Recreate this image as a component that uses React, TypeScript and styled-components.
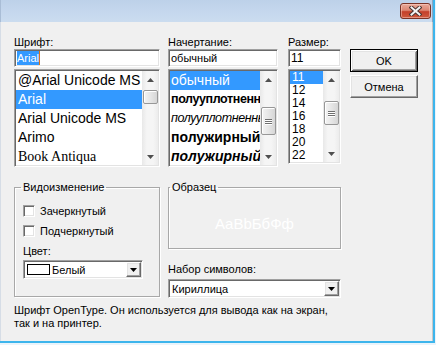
import React from "react";
import styled, { createGlobalStyle, css } from "styled-components";

const GlobalStyle = createGlobalStyle`
  html, body {
    margin: 0;
    padding: 0;
    background: #eaf4fb;
  }

  body {
    font-family: "Liberation Sans", Arial, sans-serif;
    font-size: 11px;
    color: #000;
  }

  * {
    box-sizing: border-box;
  }
`;

const sunken = css`
  border: 1px solid;
  border-color: #a0a0a0 #ffffff #ffffff #a0a0a0;
  box-shadow: inset 1px 1px 0 #696969, inset -1px -1px 0 #e3e3e3;
  padding: 1px;
  background: #fff;
`;

const raised = css`
  border: 1px solid;
  border-color: #ffffff #696969 #696969 #ffffff;
  box-shadow: inset -1px -1px 0 #a0a0a0, inset 1px 1px 0 #e3e3e3;
  background: #f0f0f0;
`;

const fontItems = [
  { name: "@Arial Unicode MS", family: `"Liberation Sans", Arial, sans-serif` },
  { name: "Arial", family: `"Liberation Sans", Arial, sans-serif`, selected: true },
  { name: "Arial Unicode MS", family: `"Liberation Sans", Arial, sans-serif` },
  { name: "Arimo", family: `Arimo, "Liberation Sans", sans-serif` },
  { name: "Book Antiqua", family: `"Liberation Serif", "DejaVu Serif", serif` },
];

// narrow = condensed face of the family, drawn a bit smaller and tighter
const styleItems = [
  { name: "обычный", weight: 400, italic: false, narrow: false, selected: true },
  { name: "полууплотненный", weight: 700, italic: false, narrow: true },
  { name: "полууплотненный", weight: 400, italic: true, narrow: true },
  { name: "полужирный", weight: 700, italic: false, narrow: false },
  { name: "полужирный", weight: 700, italic: true, narrow: false },
];

const sizeItems = ["11", "12", "14", "16", "18", "20", "22"];

const ArrowUp = () => (
  <svg width="7" height="4" viewBox="0 0 7 4">
    <path d="M0 4 L3.5 0 L7 4 Z" fill="#4f4f4f" />
  </svg>
);

const ArrowDown = () => (
  <svg width="7" height="4" viewBox="0 0 7 4">
    <path d="M0 0 L7 0 L3.5 4 Z" fill="#4f4f4f" />
  </svg>
);

const ComboArrow = () => (
  <svg width="7" height="4" viewBox="0 0 7 4">
    <path d="M0 0 L7 0 L3.5 4 Z" fill="#000" />
  </svg>
);

const CloseGlyph = () => (
  <svg width="13" height="10" viewBox="0 0 13 10">
    <path d="M2.5 1.5 L10.5 8.5 M10.5 1.5 L2.5 8.5" stroke="#4a3430" strokeWidth="4" strokeLinecap="square" />
    <path d="M2.5 1.5 L10.5 8.5 M10.5 1.5 L2.5 8.5" stroke="#f4f4f4" strokeWidth="2" strokeLinecap="square" />
  </svg>
);

type ScrollProps = { offset: number; size: number; grip?: boolean };

const VScroll = ({ offset, size, grip }: ScrollProps) => (
  <ScrollBar>
    <ScrollArrow>
      <ArrowUp />
    </ScrollArrow>
    <ScrollTrack>
      <Thumb $offset={offset} $size={size}>
        {grip && (
          <Grip>
            <span />
            <span />
            <span />
          </Grip>
        )}
      </Thumb>
    </ScrollTrack>
    <ScrollArrow>
      <ArrowDown />
    </ScrollArrow>
  </ScrollBar>
);

export default function App() {
  return (
    <>
      <GlobalStyle />
      <Window>
        <TitleBar>
          <CloseButton>
            <CloseGlyph />
          </CloseButton>
        </TitleBar>

        <Client>
          <TopRow>
            <Column $width={146} $gap={8}>
              <FieldLabel>Шрифт:</FieldLabel>
              <TextInput>
                <Selected>Arial</Selected>
                <Caret />
              </TextInput>
              <ListBox $height={98}>
                <Items>
                  {fontItems.map((f) => (
                    <FontItem key={f.name} $family={f.family} $selected={!!f.selected}>
                      {f.name}
                    </FontItem>
                  ))}
                </Items>
                <VScroll offset={2} size={14} />
              </ListBox>
            </Column>

            <Column $width={110} $gap={10}>
              <FieldLabel>Начертание:</FieldLabel>
              <TextInput>обычный</TextInput>
              <ListBox $height={98}>
                <Items>
                  {styleItems.map((s, i) => (
                    <StyleItem
                      key={i}
                      $weight={s.weight}
                      $italic={s.italic}
                      $narrow={s.narrow}
                      $selected={!!s.selected}
                    >
                      {s.name}
                    </StyleItem>
                  ))}
                </Items>
                <VScroll offset={19} size={28} grip />
              </ListBox>
            </Column>

            <Column $width={53} $gap={9}>
              <FieldLabel>Размер:</FieldLabel>
              <TextInput $large>11</TextInput>
              <ListBox $height={95}>
                <Items>
                  {sizeItems.map((s, i) => (
                    <SizeItem key={s} $selected={i === 0}>
                      {s}
                    </SizeItem>
                  ))}
                </Items>
                <VScroll offset={13} size={24} grip />
              </ListBox>
            </Column>

            <ButtonColumn>
              <DialogButton $default>OK</DialogButton>
              <DialogButton>Отмена</DialogButton>
            </ButtonColumn>
          </TopRow>

          <BottomRow>
            <GroupBox $width={146} $height={116}>
              <GroupLegend $indent={6}>Видоизменение</GroupLegend>
              <Effects>
                <CheckRow>
                  <CheckBox />
                  Зачеркнутый
                </CheckRow>
                <CheckRow>
                  <CheckBox />
                  Подчеркнутый
                </CheckRow>
                <ColorLabel>Цвет:</ColorLabel>
                <ComboBox $width={120}>
                  <ComboValue>
                    <Swatch />
                    Белый
                  </ComboValue>
                  <DropButton>
                    <ComboArrow />
                  </DropButton>
                </ComboBox>
              </Effects>
            </GroupBox>

            <RightColumn>
              <GroupBox $width={173} $height={68}>
                <GroupLegend $indent={1}>Образец</GroupLegend>
                <SampleArea>AaBbБбФф</SampleArea>
              </GroupBox>
              <ScriptLabel>Набор символов:</ScriptLabel>
              <ComboBox $width={173}>
                <ComboValue>Кириллица</ComboValue>
                <DropButton>
                  <ComboArrow />
                </DropButton>
              </ComboBox>
            </RightColumn>
          </BottomRow>

          <Note>
            Шрифт OpenType. Он используется для вывода как на экран,
            <br />
            так и на принтер.
          </Note>
        </Client>
      </Window>
    </>
  );
}

const Window = styled.div`
  width: 435px;
  height: 343px;
  display: flex;
  flex-direction: column;
  border-right: 2px solid #3db5ec;
  border-bottom: 2px solid #3db5ec;
`;

const TitleBar = styled.div`
  height: 22px;
  flex: none;
  display: flex;
  justify-content: flex-end;
  align-items: flex-start;
  padding: 3px 1px 0 0;
  background: linear-gradient(to bottom, #bdd1e9 0%, #c6d8ee 60%, #cbdcef 100%);
  border-left: 1px solid #a9bdd6;
  border-right: 1px solid #8fa6c0;
`;

const CloseButton = styled.div`
  width: 31px;
  height: 16px;
  display: flex;
  align-items: center;
  justify-content: center;
  border: 1px solid #7a3326;
  border-radius: 3px;
  background: linear-gradient(to bottom, #e9a999 0%, #dc8672 45%, #c4402a 55%, #cf5a3e 100%);
  box-shadow: inset 0 0 0 1px rgba(255, 220, 210, 0.45);
`;

const Client = styled.div`
  flex: 1;
  background: #f0f0f0;
  padding: 13px 0 0 13px;
  border-left: 1px solid #d6dde6;
  border-right: 1px solid #c8c8c8;
`;

const TopRow = styled.div`
  display: flex;
  align-items: flex-start;
`;

const Column = styled.div<{ $width: number; $gap: number }>`
  width: ${(p) => p.$width}px;
  margin-right: ${(p) => p.$gap}px;
  display: flex;
  flex-direction: column;
`;

const FieldLabel = styled.div`
  height: 14px;
  line-height: 14px;
  white-space: nowrap;
`;

const TextInput = styled.div<{ $large?: boolean }>`
  ${sunken};
  height: 18px;
  display: flex;
  align-items: center;
  padding: 1px 2px;
  font-size: ${(p) => (p.$large ? 12 : 11)}px;
  white-space: nowrap;
  margin-bottom: 2px;
`;

const Selected = styled.span`
  background: #3399ff;
  color: #fff;
  line-height: 14px;
`;

const Caret = styled.span`
  width: 1px;
  height: 14px;
  background: #d8741c;
`;

const ListBox = styled.div<{ $height: number }>`
  ${sunken};
  height: ${(p) => p.$height}px;
  display: flex;
  overflow: hidden;
`;

const Items = styled.div`
  flex: 1;
  min-width: 0;
  overflow: hidden;
`;

const itemBase = css<{ $selected: boolean }>`
  white-space: nowrap;
  overflow: hidden;
  background: ${(p) => (p.$selected ? "#3399ff" : "transparent")};
  color: ${(p) => (p.$selected ? "#fff" : "#000")};
`;

const FontItem = styled.div<{ $family: string; $selected: boolean }>`
  ${itemBase};
  height: 19px;
  line-height: 19px;
  padding-left: 2px;
  font-family: ${(p) => p.$family};
  font-size: 14px;
`;

const StyleItem = styled.div<{
  $weight: number;
  $italic: boolean;
  $narrow: boolean;
  $selected: boolean;
}>`
  ${itemBase};
  height: 19px;
  line-height: 19px;
  padding-left: 1px;
  font-size: ${(p) => (p.$narrow ? 12.5 : 14)}px;
  letter-spacing: ${(p) => (p.$narrow ? "-0.4px" : "normal")};
  font-weight: ${(p) => p.$weight};
  font-style: ${(p) => (p.$italic ? "italic" : "normal")};
`;

const SizeItem = styled.div<{ $selected: boolean }>`
  ${itemBase};
  height: 13px;
  line-height: 13px;
  padding-left: 2px;
  font-size: 12px;
`;

const ScrollBar = styled.div`
  width: 16px;
  flex: none;
  display: flex;
  flex-direction: column;
  background: linear-gradient(to right, #e8e8e8, #f5f5f5 30%, #f5f5f5 70%, #ececec);
`;

const ScrollArrow = styled.div`
  height: 17px;
  flex: none;
  display: flex;
  align-items: center;
  justify-content: center;
`;

const ScrollTrack = styled.div`
  flex: 1;
  display: flex;
  flex-direction: column;
  align-items: center;
`;

const Thumb = styled.div<{ $offset: number; $size: number }>`
  width: 15px;
  height: ${(p) => p.$size}px;
  margin-top: ${(p) => p.$offset}px;
  border: 1px solid #979797;
  border-radius: 2px;
  background: linear-gradient(to right, #f4f4f4, #e6e6e6 50%, #d6d6d6);
  box-shadow: inset 1px 1px 0 #fff;
  display: flex;
  align-items: center;
  justify-content: center;
`;

const Grip = styled.div`
  display: flex;
  flex-direction: column;
  gap: 1px;

  span {
    width: 7px;
    height: 1px;
    background: #6f6f6f;
    box-shadow: 0 1px 0 #fff;
  }
`;

const ButtonColumn = styled.div`
  display: flex;
  flex-direction: column;
  gap: 3px;
  padding-top: 14px;
`;

const DialogButton = styled.div<{ $default?: boolean }>`
  width: 68px;
  height: 23px;
  display: flex;
  align-items: center;
  justify-content: center;
  ${raised};
  ${(p) =>
    p.$default &&
    css`
      border: 1px solid #000;
      box-shadow: inset 1px 1px 0 #fff, inset -1px -1px 0 #696969, inset 2px 2px 0 #e3e3e3,
        inset -2px -2px 0 #a0a0a0;
    `}
`;

const BottomRow = styled.div`
  display: flex;
  align-items: flex-start;
  margin-top: 14px;
`;

const GroupBox = styled.fieldset<{ $width: number; $height: number }>`
  width: ${(p) => p.$width}px;
  height: ${(p) => p.$height}px;
  margin: 0;
  padding: 0;
  border: 1px solid #a8a8a8;
  box-shadow: 1px 1px 0 #fff, inset 1px 1px 0 #fff;
  min-width: 0;
`;

const GroupLegend = styled.legend<{ $indent: number }>`
  margin-left: ${(p) => p.$indent}px;
  padding: 0 2px;
  line-height: 13px;
  white-space: nowrap;
`;

const Effects = styled.div`
  display: flex;
  flex-direction: column;
  padding: 10px 0 0 8px;
`;

const CheckRow = styled.div`
  height: 13px;
  display: flex;
  align-items: center;
  gap: 5px;
  margin-bottom: 7px;
`;

const CheckBox = styled.span`
  width: 12px;
  height: 12px;
  ${sunken};
`;

const ColorLabel = styled.div`
  height: 13px;
  line-height: 13px;
  margin: 1px 0 2px;
`;

const ComboBox = styled.div<{ $width: number }>`
  ${sunken};
  width: ${(p) => p.$width}px;
  height: 19px;
  display: flex;
  align-items: stretch;
`;

const ComboValue = styled.div`
  flex: 1;
  display: flex;
  align-items: center;
  gap: 2px;
  padding-left: 2px;
  white-space: nowrap;
`;

const Swatch = styled.span`
  width: 23px;
  height: 11px;
  border: 1px solid #000;
  background: #fff;
`;

const DropButton = styled.div`
  width: 15px;
  flex: none;
  display: flex;
  align-items: center;
  justify-content: center;
  ${raised};
`;

const RightColumn = styled.div`
  margin-left: 8px;
  display: flex;
  flex-direction: column;
`;

const SampleArea = styled.div`
  height: 48px;
  display: flex;
  align-items: center;
  justify-content: center;
  padding-top: 10px;
  font-size: 15px;
  color: #ffffff;
`;

const ScriptLabel = styled.div`
  height: 13px;
  line-height: 13px;
  margin: 14px 0 3px;
`;

const Note = styled.div`
  margin-top: 6px;
  line-height: 13px;
`;
